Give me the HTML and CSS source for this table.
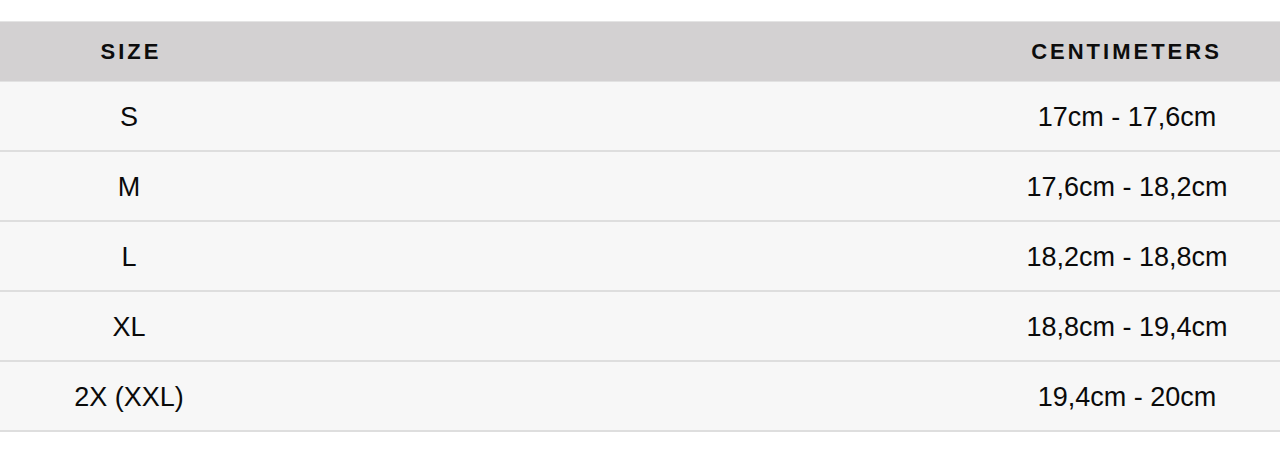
FILE: index.html
```html
<!DOCTYPE html>
<html lang="en">
<head>
<meta charset="utf-8">
<title>Size chart</title>
<link rel="stylesheet" href="styles.css">
</head>
<body>
<div class="chart">
  <div class="row head">
    <div class="cell">SIZE</div>
    <div class="cell"></div>
    <div class="cell cell-end">CENTIMETERS</div>
  </div>
  <div class="row">
    <div class="cell">S</div>
    <div class="cell"></div>
    <div class="cell">17cm - 17,6cm</div>
  </div>
  <div class="row">
    <div class="cell">M</div>
    <div class="cell"></div>
    <div class="cell">17,6cm - 18,2cm</div>
  </div>
  <div class="row">
    <div class="cell">L</div>
    <div class="cell"></div>
    <div class="cell">18,2cm - 18,8cm</div>
  </div>
  <div class="row">
    <div class="cell">XL</div>
    <div class="cell"></div>
    <div class="cell">18,8cm - 19,4cm</div>
  </div>
  <div class="row">
    <div class="cell">2X (XXL)</div>
    <div class="cell"></div>
    <div class="cell">19,4cm - 20cm</div>
  </div>
</div>
</body>
</html>
```

FILE: styles.css
```css
html, body {
  margin: 0;
  padding: 0;
  background: #ffffff;
}

body {
  font-family: "Liberation Sans", Arial, sans-serif;
  color: #0a0a0a;
}

.chart {
  padding-top: 21px;
}

.row {
  display: grid;
  grid-template-columns: 258px 1fr 306px;
  height: 68px;
  align-items: center;
  background: #f7f7f7;
  border-bottom: 2px solid #dedede;
}

.row .cell {
  text-align: center;
  font-size: 27px;
  white-space: nowrap;
  padding-top: 2px;
}

.row.head {
  height: 59px;
  background: #d3d1d2;
  border-top: 1px solid #e4e4e4;
  border-bottom: 1px solid #e2e2e2;
}

.row.head .cell {
  font-size: 22px;
  font-weight: bold;
  letter-spacing: 3px;
  padding-left: 4px;
  padding-top: 0;
  color: #0d0d0d;
}

.row.head .cell-end {
  padding-left: 3px;
  padding-right: 4px;
}
```
